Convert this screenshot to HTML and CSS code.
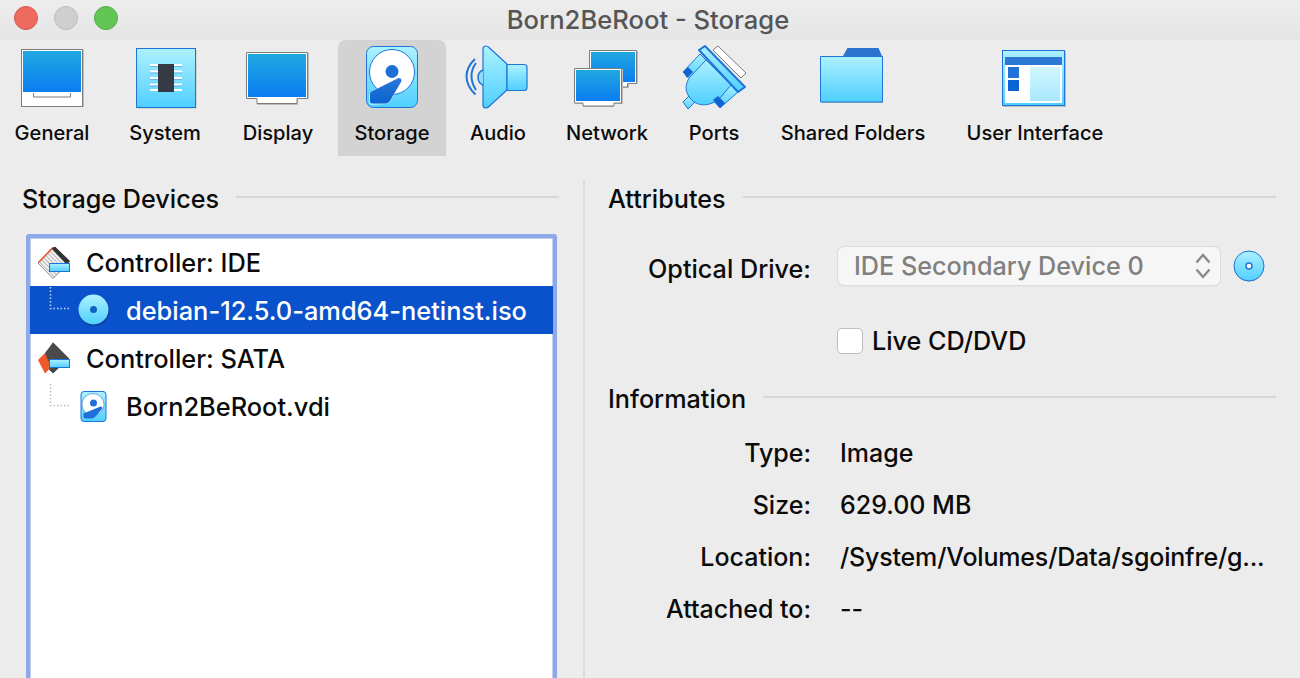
FILE: index.html
```html
<!DOCTYPE html>
<html lang="en">
<head>
<meta charset="utf-8">
<title>Born2BeRoot - Storage</title>
<link rel="stylesheet" href="styles.css">
</head>
<body>
<svg class="defs" aria-hidden="true">
  <defs>
    <linearGradient id="screen" x1="0" y1="0" x2="0" y2="1"><stop offset="0" stop-color="#20a8e0"/><stop offset="1" stop-color="#0a7df2"/></linearGradient>
    <linearGradient id="sky" x1="0" y1="0" x2="0" y2="1"><stop offset="0" stop-color="#adf1ff"/><stop offset="1" stop-color="#4fcfff"/></linearGradient>
    <linearGradient id="pale" x1="0" y1="0" x2="0" y2="1"><stop offset="0" stop-color="#d2f7ff"/><stop offset="1" stop-color="#a8e8ff"/></linearGradient>
    <linearGradient id="deep" x1="0" y1="0" x2="0" y2="1"><stop offset="0" stop-color="#2c78d6"/><stop offset="1" stop-color="#0a62d0"/></linearGradient>
    <pattern id="stripes" width="3" height="3" patternUnits="userSpaceOnUse" patternTransform="rotate(45)"><rect width="3" height="3" fill="#f4f4f4"/><rect width="3" height="1" fill="#b4b4b4"/></pattern>
  </defs>
</svg>
<div class="window">
  <header class="titlebar">
    <div class="lights"><span class="light red"></span><span class="light gray"></span><span class="light green"></span></div>
    <div class="title">Born2BeRoot - Storage</div>
    <div></div>
  </header>
  <nav class="toolbar">
    <div class="tool">
      <svg class="tool-icon" viewBox="18 44 68 68"><rect x="23" y="50" width="61" height="57" fill="#bdbdbd"/><rect x="21.500" y="49.500" width="61" height="57" fill="#fff" stroke="#7c7c7c"/><rect x="23" y="51" width="58" height="41" fill="url(#screen)"/><path d="M33.500 93v4h37v-4" fill="none" stroke="#7c7c7c"/></svg>
      <span>General</span>
    </div>
    <div class="tool">
      <svg class="tool-icon" viewBox="131 44 68 68"><rect x="137.500" y="49.500" width="59" height="59" fill="#bdbdbd"/><rect x="136.500" y="48.500" width="59" height="59" fill="url(#sky)" stroke="#1e74d8"/><g fill="#fff"><rect x="150" y="64" width="32" height="2"/><rect x="150" y="70.500" width="32" height="2"/><rect x="150" y="77" width="32" height="2"/><rect x="150" y="83.500" width="32" height="2"/><rect x="150" y="89" width="32" height="2"/></g><g fill="#74b4e8"><rect x="150" y="66" width="32" height="1"/><rect x="150" y="72.500" width="32" height="1"/><rect x="150" y="79" width="32" height="1"/><rect x="150" y="85.500" width="32" height="1"/></g><rect x="158" y="64" width="16" height="28" fill="#353a45"/></svg>
      <span>System</span>
    </div>
    <div class="tool tool-display">
      <svg class="tool-icon" viewBox="244 44 68 68"><path d="M247 53h62v46h-11v6h-41v-6h-10z" fill="#bdbdbd"/><path d="M246.500 52.500h61v46h-10.500v5h-40v-5h-10.500z" fill="#fff" stroke="#7c7c7c"/><rect x="248" y="54" width="58" height="43" fill="url(#screen)"/></svg>
      <span>Display</span>
    </div>
    <div class="tool active">
      <svg class="tool-icon" viewBox="358 44 68 68"><rect x="366.500" y="46.500" width="51" height="61" rx="7" fill="url(#sky)" stroke="#1e74d8"/><circle cx="392" cy="72" r="22.500" fill="#fff" stroke="#1e74d8"/><circle cx="392" cy="71.500" r="6.500" fill="#1e70d8"/><path d="M397 76l4-1 3 4-14 23-3 2-16 1-2-2v-8l2-3z" fill="#fff" fill-opacity=".55"/><path d="M398 78.200q2-.8 3 .8t0 3l-10.500 18q-1.500 3-4 3.500h-14q-2.500 0-2.500-2.500v-7q0-1.500 1.500-2.500z" fill="url(#deep)"/></svg>
      <span>Storage</span>
    </div>
    <div class="tool">
      <svg class="tool-icon" viewBox="464 44 68 68"><path d="M483 49q0-3 3-3q1.500 0 3 1.500l18 16.500v26l-18 16.500q-1.500 1.500-3 1.500q-3 0-3-3z" fill="url(#sky)" stroke="#1e74d8" stroke-width="1.200"/><path d="M507 64.500h17q3 0 3 3v20q0 3-3 3h-17z" fill="url(#sky)" stroke="#1e74d8" stroke-width="1.200"/><g fill="none" stroke="#1e74d8"><path d="M483 70q-5 2-5 7.500t5 7.500" stroke-width="1.500" fill="#8fdcff"/><path d="M476 63q-4.500 6-4.500 13t4.500 14" stroke-width="2"/><path d="M475 59q-8.500 8-8.500 17.500t9 18" stroke-width="2"/></g></svg>
      <span>Audio</span>
    </div>
    <div class="tool">
      <svg class="tool-icon" viewBox="573 44 68 68"><path d="M590 51h48v33h-9v4h-6v-7h-33z" fill="#bdbdbd"/><path d="M589.500 50.500h47v33h-9v3.500h-6v-3.500h-32z" fill="#fff" stroke="#7c7c7c"/><rect x="591" y="52" width="44" height="30" fill="url(#screen)"/><path d="M575 69h48v35h-9v3h-31v-3h-8z" fill="#bdbdbd"/><path d="M574.500 68.500h47v34.500h-7.500v3h-31v-3h-8.500z" fill="#fff" stroke="#7c7c7c"/><rect x="576" y="70" width="44" height="31" fill="url(#screen)"/></svg>
      <span>Network</span>
    </div>
    <div class="tool">
      <svg class="tool-icon" viewBox="680 44 68 68"><g stroke="#1e74d8" stroke-linejoin="round"><path d="M713 50l5-4 28 27-5 5z" fill="#fff" stroke="#7c7c7c"/><path d="M683 102l6-6 6 6-7 7z" fill="url(#sky)"/><path d="M700 54l8 8-17 17-8-7z" fill="url(#sky)"/><path d="M738 92l-7-8-18 16 7 8z" fill="url(#sky)"/><path d="M706 60l25 25-11 13c-8 8-23 10-30 0c-6-8-4-14-1-20z" fill="url(#sky)"/><path d="M699 50l6-4 40 41-7 5z" fill="url(#sky)" stroke-width="2"/></g><path d="M683 72l5-5 5 5-6 6z" fill="#1462d2"/><path d="M713 100l5-4 7 7-5 5z" fill="#1462d2"/></svg>
      <span>Ports</span>
    </div>
    <div class="tool">
      <svg class="tool-icon" viewBox="819 44 68 68"><path d="M843 56l4.500-8h31l3.500 8z" fill="#2c72cf"/><path d="M821 57h22l.5-1h38.500v46h-61z" fill="#bdbdbd" transform="translate(1 1)"/><path d="M820.500 56.500h62v45.500h-62z" fill="url(#sky)" stroke="#1e74d8"/></svg>
      <span>Shared Folders</span>
    </div>
    <div class="tool">
      <svg class="tool-icon" viewBox="1001 44 68 68"><rect x="1003" y="51" width="63" height="56" fill="#bdbdbd"/><rect x="1002.500" y="50.500" width="62" height="55" fill="url(#sky)" stroke="#1e74d8"/><rect x="1005" y="65" width="57" height="38" fill="#fff"/><rect x="1005" y="57" width="57" height="8" fill="#2c78d6"/><rect x="1008" y="67" width="11" height="11" fill="#2272d8"/><rect x="1008" y="80" width="11" height="11" fill="#0a64d6"/><rect x="1030" y="67" width="30" height="34" fill="url(#pale)"/></svg>
      <span>User Interface</span>
    </div>
  </nav>
  <main class="panes">
    <section class="left-pane">
      <div class="heading"><h2>Storage Devices</h2><span class="rule"></span></div>
      <div class="tree">
        <div class="row">
          <svg class="ctl-icon" viewBox="0 0 34 34"><path d="M16 1l16 15.500-16 16-15-15.500z" fill="url(#stripes)" stroke="#8e8e8e"/><path d="M1.500 16.500l14.500-15" stroke="#e8552a" stroke-width="1.500"/><path d="M15 3l3-2.500 15 14.500-3 4z" fill="#333"/><rect x="12.500" y="17.500" width="20" height="8" fill="url(#sky)" stroke="#1e74d8"/></svg>
          <span class="label ctl">Controller: IDE</span>
        </div>
        <div class="row selected">
          <svg class="link" viewBox="0 0 22 26"><path d="M1.500 1v21.500h20" fill="none" stroke="#c4d4ee" stroke-width="1.500" stroke-dasharray="1.500 2"/></svg>
          <svg class="dev-icon" viewBox="0 0 32 32"><circle cx="16" cy="16.500" r="15.500" fill="#0d3f9c"/><circle cx="15.500" cy="15.500" r="15" fill="url(#sky)"/><circle cx="15.500" cy="15.500" r="3.500" fill="#0f62c4"/></svg>
          <span class="label">debian-12.5.0-amd64-netinst.iso</span>
        </div>
        <div class="row">
          <svg class="ctl-icon" viewBox="0 0 34 34"><path d="M16 .5l16 16-16 15-12-12z" fill="#464646"/><path d="M1 18l7-7 10 10-10 10.500z" fill="#f0582a"/><path d="M8 11l8-10.500 16 16-5 4h-15z" fill="#4a4a4a"/><rect x="12.500" y="17.500" width="20" height="8" fill="url(#sky)" stroke="#1e74d8"/></svg>
          <span class="label ctl">Controller: SATA</span>
        </div>
        <div class="row">
          <svg class="link" viewBox="0 0 22 26"><path d="M1.500 1v21.500h20" fill="none" stroke="#bdbdbd" stroke-width="1.500" stroke-dasharray="1.500 2"/></svg>
          <svg class="dev-icon" viewBox="0 0 27 32"><rect x=".5" y=".5" width="25" height="30" rx="3" fill="url(#sky)" stroke="#1e74d8"/><circle cx="12.500" cy="13.500" r="11" fill="#fff" stroke="#1e74d8" stroke-width=".6"/><circle cx="13" cy="12" r="3.500" fill="#1e70d8"/><path d="M20 15.500q2 0 2 2l-7 8q-2 2-4 2h-6q-2 0-2-2v-3z" fill="#1e70d8"/></svg>
          <span class="label">Born2BeRoot.vdi</span>
        </div>
      </div>
    </section>
    <section class="right-pane">
      <div class="heading"><h2>Attributes</h2><span class="rule"></span></div>
      <div class="drive-row">
        <span class="field-label">Optical Drive:</span>
        <div class="combo"><span>IDE Secondary Device 0</span>
          <svg class="chev" viewBox="0 0 16 28"><path d="M1.500 10.500l6.500-7.500 6.500 7.500M1.500 17.500l6.500 7.500 6.500-7.500" fill="none" stroke="#8a8a8a" stroke-width="2.400"/></svg>
        </div>
        <svg class="disc-btn" viewBox="0 0 32 32"><circle cx="16" cy="16.500" r="15" fill="#9a9a9a"/><circle cx="16" cy="16" r="15" fill="url(#sky)" stroke="#1e74d8"/><circle cx="16" cy="16" r="3" fill="#fff" stroke="#1e74d8" stroke-width="1.500"/></svg>
      </div>
      <label class="check-row"><span class="checkbox"></span><span>Live CD/DVD</span></label>
      <div class="heading info"><h2>Information</h2><span class="rule"></span></div>
      <dl class="info-grid">
        <dt>Type:</dt><dd>Image</dd>
        <dt>Size:</dt><dd>629.00 MB</dd>
        <dt>Location:</dt><dd class="path">/System/Volumes/Data/sgoinfre/g...</dd>
        <dt>Attached to:</dt><dd>--</dd>
      </dl>
    </section>
  </main>
</div>
</body>
</html>
```

FILE: styles.css
```css
* { box-sizing: border-box; }
html, body { margin: 0; padding: 0; height: 100%; overflow: hidden; }
body { background: #ececec; font-family: "Inter", "Liberation Sans", sans-serif; font-weight: 450; color: #0b0b0b; }
.defs { display: block; width: 0; height: 0; }
.window { height: 678px; display: flex; flex-direction: column; overflow: hidden; }

.titlebar { height: 40px; flex: none; display: grid; grid-template-columns: 1fr auto 1fr; align-items: center; background: linear-gradient(#ededed, #e5e5e5); }
.lights { display: flex; gap: 16px; padding-left: 14px; padding-bottom: 4px; }
.light { width: 24px; height: 24px; border-radius: 50%; }
.red { background: #ec6a5e; border: 1px solid #d9584d; }
.gray { background: #cfcfcf; border: 1px solid #bcbcbc; }
.green { background: #62c655; border: 1px solid #4fae45; }
.title { font-size: 25.600px; color: #555; padding-right: 4px; padding-bottom: 1px; }

.toolbar { height: 116px; flex: none; display: grid; grid-template-columns: 106px 102px 104px 108px 86px 114px 82px 178px 168px; column-gap: 9px; margin-left: -1px; }
.tool { display: flex; flex-direction: column; align-items: center; padding-top: 4px; font-size: 20.100px; border-radius: 8px 8px 0 0; white-space: nowrap; }
.tool-display { padding-left: 2px; }
.tool-icon { width: 68px; height: 68px; flex: none; display: block; }
.tool span { margin-top: 9px; line-height: 24px; }
.tool.active { background: #d3d3d3; }

.panes { flex: 1; display: flex; min-height: 0; }
.left-pane { width: 585px; flex: none; border-right: 2px solid #dcdcdc; margin-top: 24px; padding: 0 24px 0 22px; }
.right-pane { flex: 1; padding: 24px 24px 0 23px; }
.heading { display: flex; align-items: center; gap: 17px; height: 38px; }
.heading h2 { margin: 0; font-size: 25.200px; font-weight: 450; white-space: nowrap; }
.rule { flex: 1; height: 2px; background: #d6d6d6; margin-top: -4px; }

.tree { margin: 16px 0 0 4px; height: 600px; width: 531px; background: #fff; border: 4px solid #8ea9e8; border-radius: 3px; box-shadow: inset 0 0 0 1px #c2cff0; }
.row { height: 48px; display: flex; align-items: center; font-size: 25.400px; padding-top: 1px; }
.row.selected { padding-top: 0; background: #0a52cc; color: #fff; }
.ctl-icon { width: 34px; height: 34px; margin-left: 7px; flex: none; }
.ctl { margin-left: 15px; }
.link { width: 22px; height: 26px; margin: -22px 0 0 19px; flex: none; }
.dev-icon { width: 32px; height: 32px; margin-left: 7px; flex: none; }
.label { white-space: nowrap; }
.dev-icon + .label { margin-left: 16px; }

.drive-row { display: flex; align-items: center; height: 38px; margin-top: 29px; }
.field-label { width: 203px; text-align: right; font-size: 25.200px; padding-top: 6px; white-space: nowrap; }
.combo { width: 382px; height: 38px; margin-left: 27px; border-radius: 6px; background: #f6f6f6; box-shadow: 0 0 0 1px #dcdcdc, 0 1px 1px #ccc; display: flex; align-items: center; justify-content: space-between; padding: 0 9px 0 16px; font-size: 25.200px; color: #808080; }
.chev { width: 16px; height: 28px; }
.disc-btn { width: 32px; height: 32px; margin-left: 13px; flex: none; }

.check-row { display: flex; align-items: center; gap: 9px; margin: 42px 0 0 229px; font-size: 25.200px; height: 28px; }
.checkbox { width: 26px; height: 26px; background: #fff; border: 1px solid #bdbdbd; border-radius: 5px; }

.heading.info { margin-top: 25px; }
.info-grid { display: grid; grid-template-columns: 203px 1fr; column-gap: 29px; grid-auto-rows: 52px; margin: 9px 0 0; font-size: 25px; align-items: center; }
.info-grid dt { text-align: right; }
.info-grid dd { margin: 0; white-space: nowrap; }
.info-grid dd.path { letter-spacing: -0.18px; }
```
